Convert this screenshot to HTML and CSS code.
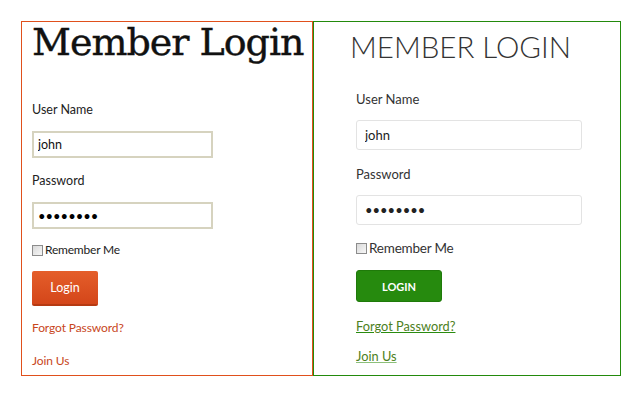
FILE: index.html
```html
<!DOCTYPE html>
<html>
<head>
<meta charset="utf-8">
<link rel="stylesheet" href="styles.css">
</head>
<body>
<div class="page">
  <form class="panel panel-a">
    <h1 class="a-title">Member Login</h1>
    <label class="a-label a-first">User Name</label>
    <input class="a-input" type="text" value="john">
    <label class="a-label">Password</label>
    <input class="a-input a-pass" type="password" value="password">
    <div class="a-check"><span class="box"></span><span>Remember Me</span></div>
    <button class="a-btn" type="button">Login</button>
    <a class="a-link a-forgot" href="#">Forgot Password?</a>
    <a class="a-link a-join" href="#">Join Us</a>
  </form>
  <form class="panel panel-b">
    <h1 class="b-title">MEMBER LOGIN</h1>
    <label class="b-label b-first">User Name</label>
    <input class="b-input" type="text" value="john">
    <label class="b-label">Password</label>
    <input class="b-input b-pass" type="password" value="password">
    <div class="b-check"><span class="box"></span><span>Remember Me</span></div>
    <button class="b-btn" type="button">LOGIN</button>
    <a class="b-link b-forgot" href="#">Forgot Password?</a>
    <a class="b-link b-join" href="#">Join Us</a>
  </form>
</div>
</body>
</html>
```
FILE: styles.css
```css
html, body { margin: 0; padding: 0; background: #fff; }
.page {
  display: flex;
  padding: 21px 0 0 21px;
}
.panel {
  display: flex;
  flex-direction: column;
  align-items: flex-start;
  height: 353px;
  margin: 0;
}
.panel-a {
  width: 280px;
  border: 1px solid #e0501c;
  padding: 0 0 0 10px;
}
.panel-b {
  width: 264px;
  border: 1px solid #238a0c;
  padding: 0 0 0 42px;
}

/* left panel */
.a-title {
  font-family: "DejaVu Serif", serif;
  font-weight: normal;
  font-size: 38px;
  line-height: 36px;
  margin: 2px 0 0 0;
  color: #111;
  letter-spacing: -1px;
  -webkit-text-stroke: 0.4px #111;
}
.a-label {
  font-family: Lato, sans-serif;
  font-size: 12.5px;
  line-height: 16px;
  color: #222;
  margin-top: 15px;
  display: block;
}
.a-first { margin-top: 42px; }
.a-input {
  box-sizing: border-box;
  width: 181px;
  height: 27px;
  margin: 13px 0 0 0;
  border: 2px solid #d6d3bf;
  padding: 0 4px;
  font-family: Lato, sans-serif;
  font-size: 12.5px;
  color: #111;
  outline: none;
}
.a-pass { font-size: 13px; color: #000; }
.a-check {
  display: flex;
  align-items: center;
  margin-top: 13px;
  font-family: Lato, sans-serif;
  font-size: 12px;
  letter-spacing: -0.2px;
  line-height: 16px;
  color: #222;
}
.box {
  width: 11px;
  height: 11px;
  border: 1px solid #8c8c8c;
  box-sizing: border-box;
  background: linear-gradient(135deg, #d9d9d9, #f7f7f7);
  margin-right: 2px;
}
.a-btn {
  width: 66px;
  height: 35px;
  margin-top: 13px;
  border: none;
  border-bottom: 2px solid #b63a12;
  border-radius: 2px;
  background: linear-gradient(#e45e2a, #d4461a);
  color: #fff;
  font-family: Lato, sans-serif;
  font-size: 12.5px;
  padding: 0;
}
.a-link {
  font-family: Lato, sans-serif;
  font-size: 12px;
  letter-spacing: -0.1px;
  line-height: 16px;
  color: #c8461c;
  text-decoration: none;
}
.a-forgot { margin-top: 14px; }
.a-join { margin-top: 17px; }

/* right panel */
.b-title {
  font-family: Lato, sans-serif;
  font-weight: 300;
  font-size: 29.5px;
  line-height: 36px;
  margin: 7px 0 0 -6px;
  color: #333;
  letter-spacing: 0;
}
.b-label {
  font-family: Lato, sans-serif;
  font-size: 13px;
  line-height: 16px;
  color: #333;
  margin-top: 16px;
  display: block;
}
.b-first { margin-top: 26px; }
.b-input {
  box-sizing: border-box;
  width: 226px;
  height: 30px;
  margin: 13px 0 0 0;
  border: 1px solid #e3e3e3;
  border-radius: 3px;
  padding: 0 8px;
  font-family: Lato, sans-serif;
  font-size: 13px;
  color: #222;
  outline: none;
}
.b-check {
  display: flex;
  align-items: center;
  margin-top: 15px;
  font-family: Lato, sans-serif;
  font-size: 13.5px;
  letter-spacing: -0.2px;
  line-height: 16px;
  color: #333;
}
.b-btn {
  width: 86px;
  height: 32px;
  margin-top: 14px;
  border: 1px solid #1f7a0a;
  border-radius: 3px;
  background: #268a0e;
  color: #fff;
  font-family: Lato, sans-serif;
  font-weight: bold;
  font-size: 11px;
  padding: 0;
}
.b-link {
  font-family: Lato, sans-serif;
  font-size: 12.8px;
  line-height: 16px;
  color: #4d7f22;
  text-decoration: underline;
  text-decoration-color: #2a8c10;
}
.b-forgot { margin-top: 16px; }
.b-join { margin-top: 14px; text-decoration-color: #8cc07a; }
```
